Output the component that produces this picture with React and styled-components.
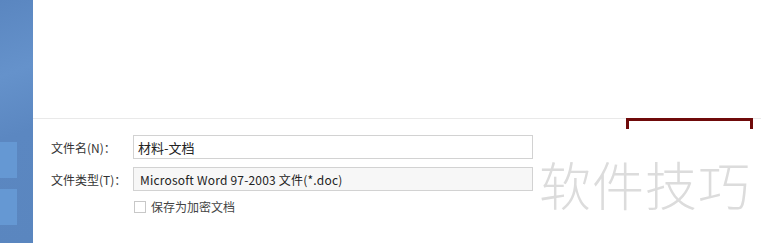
import styled, { createGlobalStyle } from "styled-components";

const GlobalStyle = createGlobalStyle`
  html, body {
    margin: 0;
    padding: 0;
    background: #fff;
  }
  body {
    font-family: "Noto Sans CJK SC", "Noto Sans", sans-serif;
    overflow: hidden;
  }
`;

const Page = styled.div`
  width: 761px;
  height: 243px;
  display: flex;
  position: relative;
  overflow: hidden;
`;

const Sidebar = styled.div`
  width: 33px;
  flex-shrink: 0;
  background: linear-gradient(160deg, #5a86c0 0%, #6592cb 30%, #5b87c1 55%, #5a86bf 100%);
  display: flex;
  flex-direction: column;
  gap: 11px;
  padding-top: 142px;
  box-sizing: border-box;
`;

const Tile = styled.div`
  width: 17px;
  height: 36px;
  background: #6598d3;
`;

const Main = styled.div`
  flex: 1;
  display: flex;
  flex-direction: column;
`;

const TopArea = styled.div`
  height: 118px;
  border-bottom: 1px solid #e9e9e9;
  flex-shrink: 0;
`;

const Form = styled.div`
  padding: 16px 0 0 18px;
  display: flex;
  flex-direction: column;
  gap: 8px;
`;

const Row = styled.div`
  display: flex;
  align-items: center;
`;

const Label = styled.span`
  width: 82px;
  font-size: 12px;
  color: #333;
  white-space: nowrap;
`;

const Field = styled.div`
  width: 400px;
  height: 24px;
  box-sizing: border-box;
  border: 1px solid #d2d2d2;
  background: ${(p) => (p.$select ? "#f7f7f7" : "#fff")};
  display: flex;
  align-items: center;
  padding-left: ${(p) => (p.$select ? "6px" : "4px")};
  font-size: ${(p) => (p.$select ? "12px" : "13px")};
  letter-spacing: ${(p) => (p.$select ? "0.2px" : "0")};
  color: #222;
  white-space: nowrap;
`;

const CheckRow = styled.label`
  display: flex;
  align-items: center;
  gap: 5px;
  margin: -1px 0 0 83px;
  font-size: 12px;
  color: #444;
`;

const Box = styled.span`
  width: 10px;
  height: 10px;
  border: 1px solid #c8c8c8;
  background: #fff;
`;

const Watermark = styled.div`
  position: absolute;
  left: 539px;
  top: 149px;
  font-size: 52px;
  font-weight: 300;
  line-height: 70px;
  color: #dcdcdc;
  letter-spacing: 1px;
  font-family: "Noto Sans CJK SC", sans-serif;
  white-space: nowrap;
`;

const Bracket = styled.div`
  position: absolute;
  left: 626px;
  top: 118px;
  width: 127px;
  height: 11px;
  box-sizing: border-box;
  border: 3px solid #6f0a0a;
  border-bottom: none;
`;

export default function App() {
  return (
    <Page>
      <GlobalStyle />
      <Sidebar>
        <Tile />
        <Tile />
      </Sidebar>
      <Main>
        <TopArea />
        <Form>
          <Row>
            <Label>文件名(N)：</Label>
            <Field>材料-文档</Field>
          </Row>
          <Row>
            <Label>文件类型(T)：</Label>
            <Field $select>Microsoft Word 97-2003 文件(*.doc)</Field>
          </Row>
          <CheckRow>
            <Box />
            保存为加密文档
          </CheckRow>
        </Form>
      </Main>
      <Bracket />
      <Watermark>软件技巧</Watermark>
    </Page>
  );
}
